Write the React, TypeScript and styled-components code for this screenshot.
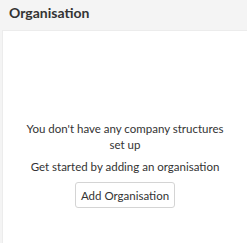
import React from "react";
import styled, { createGlobalStyle } from "styled-components";

const Global = createGlobalStyle`
  html, body {
    margin: 0;
    padding: 0;
    background: #f4f4f4;
    font-family: Lato, "Open Sans", sans-serif;
  }
`;

export default function App() {
  return (
    <>
      <Global />
      <Page>
        <Title>Organisation</Title>
        <Card>
          <Message>You don't have any company structures set up</Message>
          <Hint>Get started by adding an organisation</Hint>
          <AddButton>Add Organisation</AddButton>
        </Card>
      </Page>
    </>
  );
}

const Page = styled.div`
  display: flex;
  flex-direction: column;
  height: 243px;
  width: 247px;
  overflow: hidden;
`;

const Title = styled.h1`
  margin: 0;
  padding: 4px 9px 0;
  height: 26px;
  font-size: 14px;
  line-height: 18px;
  font-weight: 700;
  color: #333;
`;

const Card = styled.div`
  flex: 1;
  margin-left: 2px;
  background: #fff;
  border-top: 1px solid #ececec;
  border-left: 1px solid #ececec;
  display: flex;
  flex-direction: column;
  align-items: center;
  padding-top: 90px;
`;

const Message = styled.p`
  margin: 0;
  width: 200px;
  text-align: center;
  font-size: 11.5px;
  line-height: 16px;
  color: #333;
`;

const Hint = styled.p`
  margin: 6px 0 0;
  font-size: 11.5px;
  line-height: 16px;
  color: #333;
`;

const AddButton = styled.button`
  margin-top: 7px;
  height: 26px;
  padding: 0 5px;
  background: #fff;
  border: 1px solid #d4d4d4;
  border-radius: 3px;
  font-family: inherit;
  font-size: 11.5px;
  color: #333;
`;
